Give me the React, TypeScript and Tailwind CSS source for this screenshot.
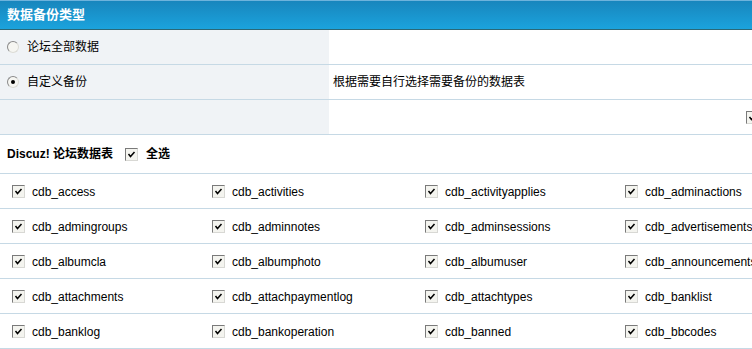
import React from 'react'

const tables = [
  'cdb_access', 'cdb_activities', 'cdb_activityapplies', 'cdb_adminactions',
  'cdb_admingroups', 'cdb_adminnotes', 'cdb_adminsessions', 'cdb_advertisements',
  'cdb_albumcla', 'cdb_albumphoto', 'cdb_albumuser', 'cdb_announcements',
  'cdb_attachments', 'cdb_attachpaymentlog', 'cdb_attachtypes', 'cdb_banklist',
  'cdb_banklog', 'cdb_bankoperation', 'cdb_banned', 'cdb_bbcodes',
]

const Check = () => (
  <span className="inline-flex w-[13px] h-[13px] shrink-0 items-center justify-center border border-t-[#7a7a7a] border-l-[#7a7a7a] border-r-[#d8d8d4] border-b-[#d8d8d4] bg-[#f4f4ef]">
    <svg width="9" height="9" viewBox="0 0 9 9">
      <path d="M1.5 4 L3.5 6.5 L7.5 2" stroke="#000" strokeWidth="1.5" fill="none" />
    </svg>
  </span>
)

const Radio = ({ checked }: { checked?: boolean }) => (
  <span className="inline-flex w-[12px] h-[12px] shrink-0 items-center justify-center rounded-full border border-t-[#8a8a8a] border-l-[#8a8a8a] border-r-[#dcdcd6] border-b-[#dcdcd6] bg-[#f6f6f2]">
    {checked && <span className="block w-[4px] h-[4px] rounded-full bg-black" />}
  </span>
)

export default function App() {
  return (
    <div
      className="w-[752px] h-[349px] overflow-hidden bg-white text-[12px] text-black"
      style={{ fontFamily: '"Liberation Sans", "Noto Sans CJK SC", sans-serif' }}
    >
      <div className="w-[800px]">
        <div className="h-[30px] flex items-center pl-[7px] border-t border-t-[#6db3dc] border-b border-b-[#2b6877] bg-gradient-to-b from-[#1886bd] to-[#1ba3dd] text-white font-bold text-[13px]">
          数据备份类型
        </div>

        <div className="flex h-[35px] border-b border-[#c6d9e5]">
          <div className="w-[329px] bg-[#f0f3f6] flex items-center gap-[8px] pl-[7px]">
            <Radio />
            <span>论坛全部数据</span>
          </div>
          <div className="flex-1" />
        </div>

        <div className="flex h-[35px] border-b border-[#c6d9e5]">
          <div className="w-[329px] bg-[#f0f3f6] flex items-center gap-[8px] pl-[7px]">
            <Radio checked />
            <span>自定义备份</span>
          </div>
          <div className="flex-1 flex items-center pl-[4px]">根据需要自行选择需要备份的数据表</div>
        </div>

        <div className="flex h-[35px] border-b border-[#c6d9e5]">
          <div className="w-[329px] bg-[#f0f3f6]" />
          <div className="flex-1 flex items-center pl-[417px]">
            <Check />
          </div>
        </div>

        <div className="h-[39px] flex items-center pl-[7px] border-b border-[#c6d9e5] font-bold">
          <span>Discuz! 论坛数据表</span>
          <span className="ml-[12px] flex"><Check /></span>
          <span className="ml-[8px]">全选</span>
        </div>

        <div className="grid grid-cols-[200px_213px_200px_1fr]">
          {tables.map((t) => (
            <div key={t} className="h-[35px] flex items-center gap-[7px] pl-[12px] pt-[1px] border-b border-[#c6d9e5]">
              <Check />
              <span className="whitespace-nowrap">{t}</span>
            </div>
          ))}
        </div>
      </div>
    </div>
  )
}
